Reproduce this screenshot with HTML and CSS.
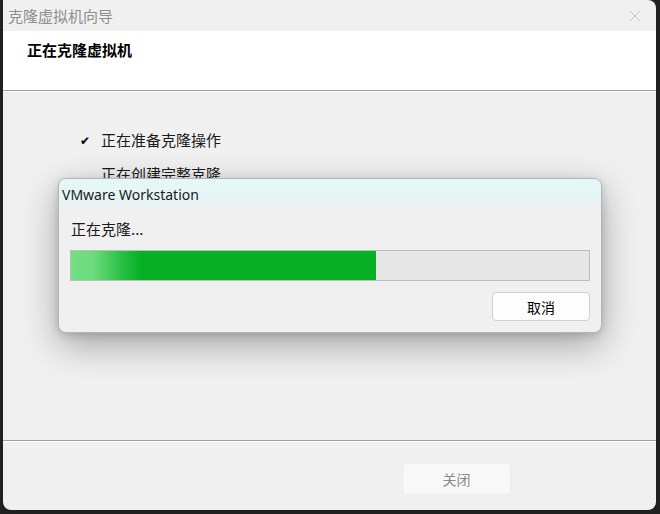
FILE: index.html
```html
<!DOCTYPE html>
<html lang="zh-CN">
<head>
    <meta charset="UTF-8">
    <meta name="viewport" content="width=device-width, initial-scale=1.0">
    <title>克隆虚拟机向导</title>
    <link rel="stylesheet" href="styles.css">
</head>
<body>
    <div class="window">
        <header class="titlebar">
            <span class="title">克隆虚拟机向导</span>
            <button class="close-btn" aria-label="关闭">
                <svg width="12" height="12" viewBox="0 0 12 12">
                    <path d="M1 1 L11 11 M11 1 L1 11" stroke="currentColor" stroke-width="1" fill="none"/>
                </svg>
            </button>
        </header>

        <section class="wizard-header">
            <h1>正在克隆虚拟机</h1>
        </section>
        <div class="separator"></div>

        <main class="wizard-body">
            <ul class="steps">
                <li class="step done"><span class="mark">✔</span>正在准备克隆操作</li>
                <li class="step"><span class="mark"></span>正在创建完整克隆</li>
            </ul>
        </main>
        <div class="separator"></div>

        <footer class="wizard-footer">
            <button class="btn btn-close" disabled>关闭</button>
        </footer>

        <div class="dialog">
            <div class="dialog-title">VMware Workstation</div>
            <div class="dialog-body">
                <div class="dialog-text">正在克隆...</div>
                <div class="progress">
                    <div class="progress-fill" style="width: 58.8%"></div>
                </div>
                <div class="dialog-actions">
                    <button class="btn btn-cancel">取消</button>
                </div>
            </div>
        </div>
    </div>
</body>
</html>
```

FILE: styles.css
```css
* {
    box-sizing: border-box;
    margin: 0;
    padding: 0;
}

body {
    font-family: "Noto Sans", "Noto Sans CJK SC", sans-serif;
    background-color: #202020;
    width: 660px;
    height: 514px;
    overflow: hidden;
}

.window {
    position: relative;
    margin-left: 3px;
    width: 653px;
    height: 510px;
    background-color: #f0f0f0;
    border-radius: 0 8px 8px 8px;
    display: flex;
    flex-direction: column;
    overflow: hidden;
}

.titlebar {
    height: 31px;
    flex-shrink: 0;
    display: flex;
    align-items: center;
    justify-content: space-between;
    padding-left: 5px;
    padding-right: 12px;
}

.title {
    font-family: "Noto Sans CJK SC", sans-serif;
    font-size: 15px;
    color: #8e8e8e;
}

.close-btn {
    background: none;
    border: none;
    color: #c4c4c4;
    width: 18px;
    height: 18px;
    display: flex;
    align-items: center;
    justify-content: center;
}

.wizard-header {
    height: 59px;
    flex-shrink: 0;
    background-color: #ffffff;
    padding: 9px 0 0 24px;
}

.wizard-header h1 {
    font-family: "Noto Sans CJK SC", sans-serif;
    font-size: 15px;
    font-weight: bold;
    line-height: 20px;
    color: #000;
}

.separator {
    height: 2px;
    flex-shrink: 0;
    border-top: 1px solid #a0a0a0;
    background-color: #ffffff;
}

.wizard-body {
    height: 348px;
    flex-shrink: 0;
    padding: 38px 0 0 77px;
}

.steps {
    list-style: none;
    display: flex;
    flex-direction: column;
    gap: 14px;
}

.step {
    display: flex;
    align-items: center;
    font-family: "Noto Sans CJK SC", sans-serif;
    font-size: 15px;
    line-height: 20px;
    color: #1a1a1a;
}

.mark {
    width: 21px;
    font-size: 12px;
    color: #000;
}

.wizard-footer {
    flex: 1;
    display: flex;
    justify-content: flex-end;
    align-items: flex-start;
    padding: 21px 145px 0 0;
}

.btn {
    font-family: "Noto Sans CJK SC", sans-serif;
    font-size: 14px;
    border-radius: 4px;
    cursor: pointer;
}

.btn-close {
    width: 109px;
    height: 32px;
    background-color: #f8f8f8;
    border: 1px solid #ececec;
    color: #8a8a8a;
}

.dialog {
    position: absolute;
    left: 55px;
    top: 178px;
    width: 544px;
    height: 155px;
    background-color: #f0f0f0;
    border: 1px solid #b4b4b4;
    border-radius: 8px;
    box-shadow: 0 12px 36px rgba(0, 0, 0, 0.32), 0 2px 8px rgba(0, 0, 0, 0.15);
    overflow: hidden;
}

.dialog-title {
    height: 30px;
    display: flex;
    align-items: center;
    padding-left: 3px;
    font-size: 14px;
    color: #1a1a1a;
    background: linear-gradient(180deg, #e5f7f6 0, #e5f5f4 20px, #f0f0f0 30px);
}

.dialog-body {
    padding: 10px 11px 0 11px;
}

.dialog-text {
    font-family: "Noto Sans CJK SC", sans-serif;
    font-size: 15px;
    line-height: 20px;
    color: #1a1a1a;
    padding-left: 1px;
}

.progress {
    margin-top: 11px;
    height: 31px;
    border: 1px solid #bcbcbc;
    background-color: #e6e6e6;
}

.progress-fill {
    height: 100%;
    background: linear-gradient(90deg, #72df82 0, #6ddc7c 22px, #2cc045 50px, #06b025 70px, #06b025 100%);
}

.dialog-actions {
    display: flex;
    justify-content: flex-end;
    margin-top: 11px;
}

.btn-cancel {
    width: 98px;
    height: 29px;
    background-color: #fdfdfd;
    border: 1px solid #d0d0d0;
    color: #000;
}
```
